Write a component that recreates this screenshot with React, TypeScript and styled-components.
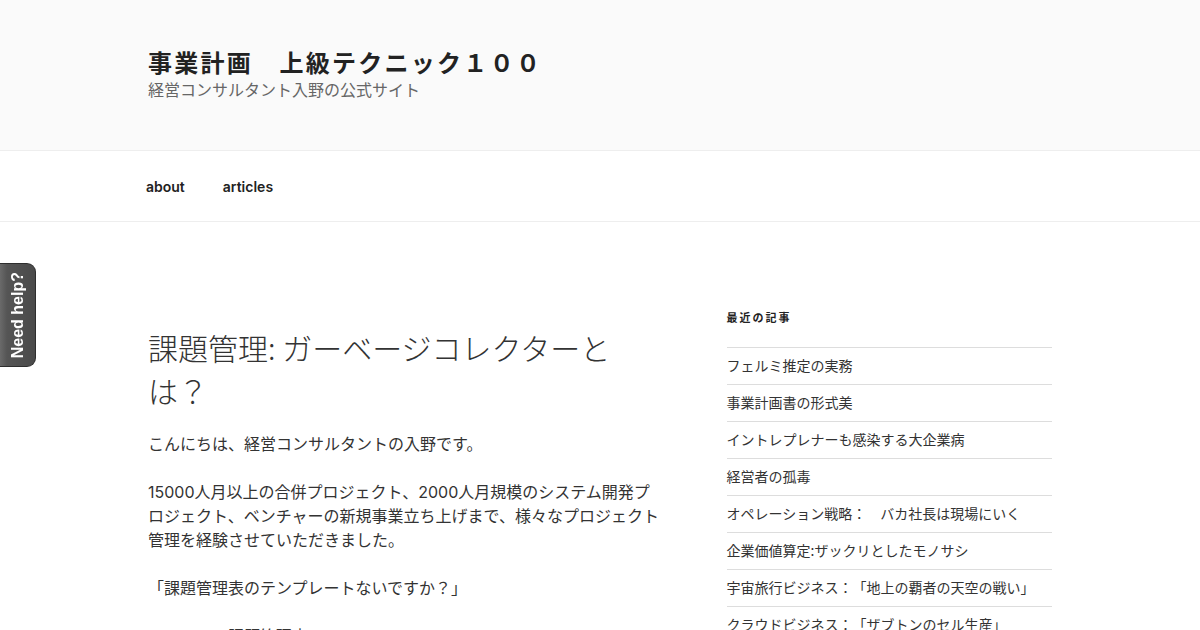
import styled, { createGlobalStyle } from "styled-components";

// 사이드바 최근 글 목록
const recentPosts: string[] = [
  "フェルミ推定の実務",
  "事業計画書の形式美",
  "イントレプレナーも感染する大企業病",
  "経営者の孤毒",
  "オペレーション戦略：　バカ社長は現場にいく",
  "企業価値算定:ザックリとしたモノサシ",
  "宇宙旅行ビジネス：「地上の覇者の天空の戦い」",
  "クラウドビジネス：「ザブトンのセル生産」",
];

const menuItems = ["about", "articles"];

const GlobalStyle = createGlobalStyle`
  html, body {
    margin: 0;
    padding: 0;
    background: #fff;
  }
  body {
    font-family: "Inter", "Noto Sans CJK JP", sans-serif;
    color: #333;
    text-spacing-trim: space-all;
    -webkit-font-smoothing: antialiased;
  }
`;

const App = () => {
  return (
    <>
      <GlobalStyle />
      <Page>
        <Header>
          <Wrap>
            <SiteTitle>事業計画　上級テクニック１００</SiteTitle>
            <SiteDescription>経営コンサルタント入野の公式サイト</SiteDescription>
          </Wrap>
        </Header>

        <Navigation>
          <NavWrap>
            <Menu>
              {menuItems.map((item) => (
                <MenuItem key={item}>{item}</MenuItem>
              ))}
            </Menu>
          </NavWrap>
        </Navigation>

        <Content>
          <Wrap>
            <Columns>
              <Primary>
                <EntryTitle>
                  課題管理: ガーベージコレクターと
                  <br />
                  は？
                </EntryTitle>
                <EntryBody>
                  <p>こんにちは、経営コンサルタントの入野です。</p>
                  <p>
                    15000人月以上の合併プロジェクト、2000人月規模のシステム開発プ
                    <br />
                    ロジェクト、ベンチャーの新規事業立ち上げまで、様々なプロジェクト
                    <br />
                    管理を経験させていただきました。
                  </p>
                  <p>「課題管理表のテンプレートないですか？」</p>
                  <p>　　　　　課題管理表</p>
                </EntryBody>
              </Primary>

              <Sidebar>
                <WidgetTitle>最近の記事</WidgetTitle>
                <WidgetList>
                  {recentPosts.map((post) => (
                    <WidgetItem key={post}>{post}</WidgetItem>
                  ))}
                </WidgetList>
              </Sidebar>
            </Columns>
          </Wrap>
        </Content>
      </Page>

      {/* 화면 왼쪽에 붙어있는 도움말 탭 */}
      <HelpTab>
        <HelpLabel>Need help?</HelpLabel>
      </HelpTab>
    </>
  );
};

export default App;

const Page = styled.div`
  width: 100%;
  min-height: 630px;
`;

const Wrap = styled.div`
  max-width: 1000px;
  margin: 0 auto;
  padding: 0 48px;
  box-sizing: border-box;
`;

const Header = styled.header`
  height: 151px;
  box-sizing: border-box;
  background: #fafafa;
  border-bottom: 1px solid #eee;
  padding-top: 47px;
`;

const SiteTitle = styled.h1`
  margin: 0;
  font-family: "Noto Sans CJK JP", sans-serif;
  font-size: 24px;
  font-weight: 700;
  line-height: 30px;
  letter-spacing: 0.095em;
  color: #222;
`;

const SiteDescription = styled.p`
  margin: 0;
  font-family: "Noto Sans CJK JP", sans-serif;
  font-size: 16px;
  line-height: 24px;
  color: #666;
`;

const Navigation = styled.nav`
  height: 71px;
  box-sizing: border-box;
  border-bottom: 1px solid #eee;
  display: flex;
  align-items: center;
  padding-top: 2px;
`;

const NavWrap = styled(Wrap)`
  width: 100%;
  padding: 0 46px;
`;

const Menu = styled.ul`
  list-style: none;
  margin: 0;
  padding: 0;
  display: flex;
  gap: 38px;
`;

const MenuItem = styled.li`
  font-family: "Inter", sans-serif;
  font-size: 14px;
  font-weight: 600;
  color: #222;
  line-height: 20px;
`;

const Content = styled.main`
  padding-top: 87px;
`;

const Columns = styled.div`
  display: grid;
  grid-template-columns: 58% 36%;
  justify-content: space-between;
`;

const Primary = styled.article`
  padding-top: 17px;
`;

const EntryTitle = styled.h2`
  margin: 0 0 20px;
  font-family: "Noto Sans CJK JP", sans-serif;
  font-size: 30px;
  font-weight: 300;
  line-height: 43px;
  color: #333;
`;

const EntryBody = styled.div`
  font-family: "Inter", "Noto Sans CJK JP", sans-serif;
  font-size: 16px;
  line-height: 24px;
  color: #333;

  p {
    margin: 0 0 24px;
    font-weight: 400;
  }
`;

const Sidebar = styled.aside`
  min-width: 0;
`;

const WidgetTitle = styled.h2`
  margin: 0 0 22px;
  font-family: "Noto Sans CJK JP", sans-serif;
  font-size: 11px;
  font-weight: 700;
  line-height: 16px;
  letter-spacing: 0.18em;
  color: #222;
`;

const WidgetList = styled.ul`
  list-style: none;
  margin: 0;
  padding: 0;
  border-top: 1px solid #ddd;
`;

const WidgetItem = styled.li`
  padding: 6px 0 8px;
  border-bottom: 1px solid #ddd;
  font-family: "Noto Sans CJK JP", sans-serif;
  font-size: 14px;
  line-height: 22px;
  color: #333;
`;

const HelpTab = styled.div`
  position: fixed;
  left: 0;
  top: 263px;
  width: 36px;
  height: 104px;
  box-sizing: border-box;
  display: flex;
  align-items: center;
  justify-content: center;
  background: linear-gradient(to right, #6a6a6a 0%, #555 20%, #4a4a4a 100%);
  border: 1px solid #2e2e2e;
  border-left: none;
  border-radius: 0 9px 9px 0;
`;

const HelpLabel = styled.span`
  color: #fff;
  font-family: "Liberation Sans", sans-serif;
  font-size: 16px;
  font-weight: 700;
  white-space: nowrap;
  writing-mode: vertical-rl;
  transform: rotate(180deg);
`;
